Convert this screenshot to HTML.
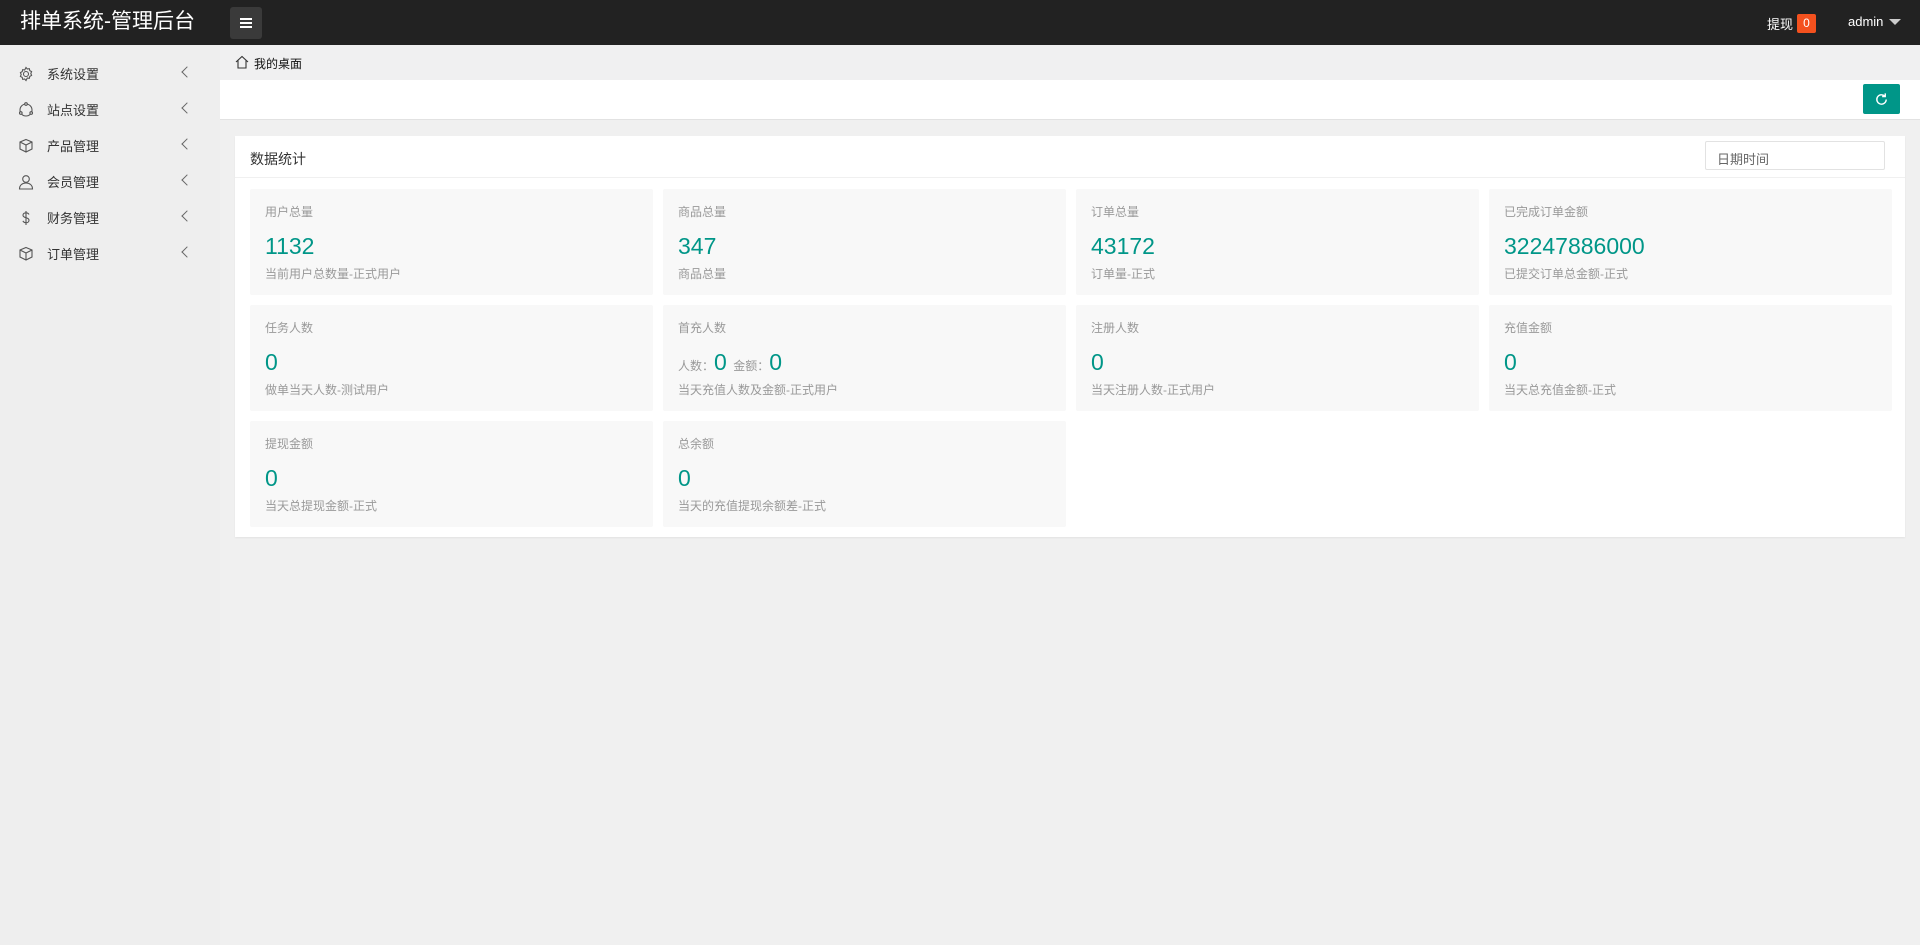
<!DOCTYPE html>
<html><head><meta charset="utf-8"><style>
*{margin:0;padding:0;box-sizing:border-box}
body{width:1920px;height:945px;background:#f0f0f0;font-family:"Liberation Sans","Noto Sans CJK SC",sans-serif;position:relative;overflow:hidden;color:#333}
.hd{position:absolute;left:0;top:0;width:1920px;height:45px;background:#222}
.logo{position:absolute;left:20px;top:8px;color:#fff;font-size:21px;line-height:28px}
.mb{position:absolute;left:230px;top:7px;width:32px;height:32px;background:#3a3a3a;border-radius:3px}
.mb i{position:absolute;left:10px;width:12px;height:1.5px;background:#fff}
.tx{position:absolute;left:1767px;top:14px;color:#fff;font-size:13px}
.badge{position:absolute;left:1797px;top:14px;width:19px;height:19px;background:#f4511e;color:#fff;font-size:12px;text-align:center;line-height:19px;border-radius:2px}
.adm{position:absolute;left:1848px;top:14px;color:#fff;font-size:13px}
.tri{position:absolute;left:1889px;top:19px;border-left:6px solid transparent;border-right:6px solid transparent;border-top:6px solid #ccc}
.sb{position:absolute;left:0;top:45px;width:220px;height:900px;background:#eee}
.it{position:absolute;left:0;width:220px;height:36px;font-size:13px;color:#333}
.it span{position:absolute;left:47px;top:9px}
.it svg{position:absolute;left:18px;top:11px}
.it b{position:absolute;left:183px;top:13px;width:8px;height:8px;border-left:1.3px solid #666;border-bottom:1.3px solid #666;transform:rotate(45deg)}
.bc{position:absolute;left:220px;top:45px;width:1700px;height:35px;background:#f0f0f1;font-size:12px;color:#111}
.bar{position:absolute;left:220px;top:80px;width:1700px;height:40px;background:#fff;border-bottom:1px solid #e2e2e2}
.rf{position:absolute;left:1863px;top:84px;width:37px;height:30px;background:#009688;border-radius:2px}
.card{position:absolute;left:235px;top:136px;width:1670px;height:401px;background:#fff;box-shadow:0 1px 2px rgba(0,0,0,.06)}
.ch{height:42px;border-bottom:1px solid #f0f0f0;font-size:14px;padding:13px 15px;color:#333}
.dt{position:absolute;left:1470px;top:5px;width:180px;height:29px;border:1px solid #e2e2e2;border-radius:2px;font-size:13px;color:#666;padding:7px 11px}
.bx{position:absolute;width:403px;height:106px;background:#f8f8f8;border-radius:2px}
.bx .l{position:absolute;left:15px;top:14px;font-size:12px;color:#999}
.bx .n{position:absolute;left:15px;top:43px;font-size:23px;color:#009688;line-height:28px}
.bx .n small{font-size:12px;color:#999}
.bx .d{position:absolute;left:15px;top:76px;font-size:12px;color:#999}
</style></head><body>
<div class="hd">
 <div class="logo">排单系统-管理后台</div>
 <div class="mb"><i style="top:11px"></i><i style="top:15px"></i><i style="top:19px"></i></div>
 <div class="tx">提现</div><div class="badge">0</div>
 <div class="adm">admin</div><div class="tri"></div>
</div>
<div class="sb">
 <div class="it" style="top:10px"><svg width="16" height="16" viewBox="0 0 16 16" fill="none" stroke="#555" stroke-width="1.1"><circle cx="8" cy="8" r="2.5"/><path d="M8 1.5l1.3 1.5 2-.4.5 2 1.8 1-.8 1.9.8 1.9-1.8 1-.5 2-2-.4L8 14.5l-1.3-1.5-2 .4-.5-2-1.8-1 .8-1.9-.8-1.9 1.8-1 .5-2 2 .4z"/></svg><span>系统设置</span><b></b></div>
 <div class="it" style="top:46px"><svg width="16" height="16" viewBox="0 0 16 16" fill="none" stroke="#555" stroke-width="1.1"><circle cx="8" cy="8" r="6"/><circle cx="8" cy="2" r="1.3" fill="#eee"/><circle cx="2.8" cy="11" r="1.3" fill="#eee"/><circle cx="13.2" cy="11" r="1.3" fill="#eee"/></svg><span>站点设置</span><b></b></div>
 <div class="it" style="top:82px"><svg width="16" height="16" viewBox="0 0 16 16" fill="none" stroke="#555" stroke-width="1.1"><path d="M8 1.5l6 2.5v7l-6 3-6-3v-7z M2 4l6 3 6-3 M8 7v7.5"/></svg><span>产品管理</span><b></b></div>
 <div class="it" style="top:118px"><svg width="16" height="16" viewBox="0 0 16 16" fill="none" stroke="#555" stroke-width="1.1"><circle cx="8" cy="5" r="3.3"/><path d="M1.5 15c0-4 3-6 6.5-6s6.5 2 6.5 6z"/></svg><span>会员管理</span><b></b></div>
 <div class="it" style="top:154px"><svg width="16" height="16" viewBox="0 0 16 16" fill="none" stroke="#555" stroke-width="1.1"><path d="M11 4.5c-.5-1-1.6-1.7-3-1.7-1.8 0-3 1-3 2.4 0 3.2 6 1.8 6 5 0 1.5-1.300 2.5-3 2.5-1.5 0-2.600-.7-3.100-1.800M8 1v14"/></svg><span>财务管理</span><b></b></div>
 <div class="it" style="top:190px"><svg width="16" height="16" viewBox="0 0 16 16" fill="none" stroke="#555" stroke-width="1.1"><path d="M8 1.5l6 2.5v7l-6 3-6-3v-7z M2 4l6 3 6-3 M8 7v7.5"/></svg><span>订单管理</span><b></b></div>
</div>
<div class="bc"><svg style="position:absolute;left:15px;top:10px" width="14" height="14" viewBox="0 0 14 14" fill="none" stroke="#333" stroke-width="1.1"><path d="M1 7l6-5.5L13 7M3 5.5V13h8V5.5"/></svg><span style="position:absolute;left:34px;top:10px">我的桌面</span></div>
<div class="bar"></div>
<div class="rf"><svg style="position:absolute;left:11px;top:8px" width="15" height="15" viewBox="0 0 16 16" fill="none" stroke="#fff" stroke-width="1.5"><path d="M13 8a5 5 0 1 1-1.5-3.6M12 1.5v3.3H8.7"/></svg></div>
<div class="card">
 <div class="ch">数据统计</div>
 <div class="dt">日期时间</div>
 <div class="bx" style="left:15px;top:53px"><div class="l">用户总量</div><div class="n">1132</div><div class="d">当前用户总数量-正式用户</div></div>
 <div class="bx" style="left:428px;top:53px"><div class="l">商品总量</div><div class="n">347</div><div class="d">商品总量</div></div>
 <div class="bx" style="left:841px;top:53px"><div class="l">订单总量</div><div class="n">43172</div><div class="d">订单量-正式</div></div>
 <div class="bx" style="left:1254px;top:53px"><div class="l">已完成订单金额</div><div class="n">32247886000</div><div class="d">已提交订单总金额-正式</div></div>
 <div class="bx" style="left:15px;top:169px"><div class="l">任务人数</div><div class="n">0</div><div class="d">做单当天人数-测试用户</div></div>
 <div class="bx" style="left:428px;top:169px"><div class="l">首充人数</div><div class="n"><small>人数：</small>0 <small>金额：</small>0</div><div class="d">当天充值人数及金额-正式用户</div></div>
 <div class="bx" style="left:841px;top:169px"><div class="l">注册人数</div><div class="n">0</div><div class="d">当天注册人数-正式用户</div></div>
 <div class="bx" style="left:1254px;top:169px"><div class="l">充值金额</div><div class="n">0</div><div class="d">当天总充值金额-正式</div></div>
 <div class="bx" style="left:15px;top:285px"><div class="l">提现金额</div><div class="n">0</div><div class="d">当天总提现金额-正式</div></div>
 <div class="bx" style="left:428px;top:285px"><div class="l">总余额</div><div class="n">0</div><div class="d">当天的充值提现余额差-正式</div></div>
</div>
</body></html>
